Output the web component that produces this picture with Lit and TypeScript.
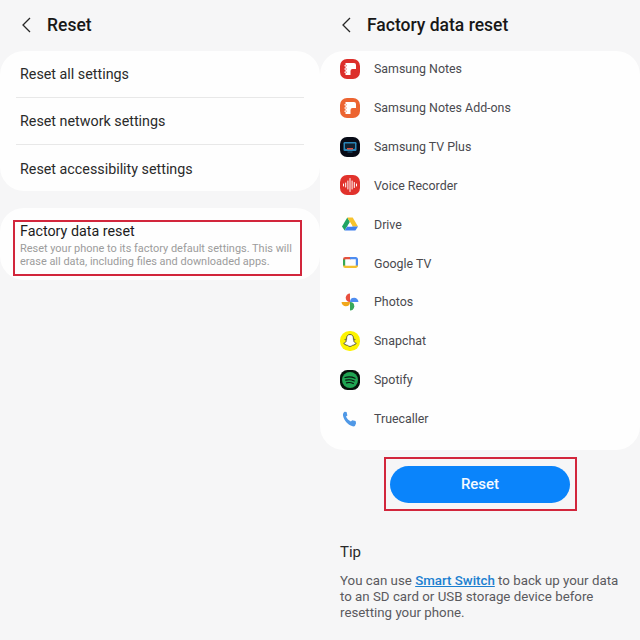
import { LitElement, html, css, svg } from "lit";
import { customElement } from "lit/decorators.js";

const notes = (bg: string) => svg`<svg viewBox="0 0 20 20" width="20" height="20">
  <rect width="20" height="20" rx="7" fill="${bg}"/>
  <path d="M5.500 4h8.500a2 2 0 0 1 2 2v4h-3.500a2 2 0 0 0-2 2v4H5.500z" fill="#fff"/>
  <path d="M4.200 6.800h2M4.200 10h2M4.200 13.200h2" stroke="#fff" stroke-width=".9"/>
  <path d="M6 6.800h.8M6 10h.8M6 13.200h.8" stroke="${bg}" stroke-width=".9"/>
</svg>`;

const icons: Record<string, unknown> = {
  notes: notes("#dc2f2b"),
  addons: notes("#ec6431"),
  tv: svg`<svg viewBox="0 0 20 20" width="20" height="20">
    <rect width="20" height="20" rx="7" fill="#070b16"/>
    <rect x="3.500" y="5" width="13" height="9" rx="1.200" fill="#2a86b8"/>
    <path d="M5 6.500h10v4.500a1 1 0 0 1-1 1H6a1 1 0 0 1-1-1z" fill="#12202f"/>
    <path d="M7 11h6v1.500H7z" fill="#d9503f"/>
    <path d="M7.500 15h5" stroke="#2a86b8" stroke-width=".7"/>
  </svg>`,
  voice: svg`<svg viewBox="0 0 20 20" width="20" height="20">
    <rect width="20" height="20" rx="7" fill="#e1322c"/>
    <path d="M3.500 9v2M5.700 8v4M7.900 6v8M10 3.500v13M12.100 6v8M14.300 7.500v5M16.500 9v2" stroke="#fff" stroke-width="1" stroke-linecap="round"/>
  </svg>`,
  drive: svg`<svg viewBox="0 0 16 14" width="16" height="14">
    <path d="M5.300.5 0 9.500l2.600 4L7.900 5z" fill="#1fa463"/>
    <path d="M5.300.5h5.400L16 9.500h-5.300z" fill="#f7c32e"/>
    <path d="M16 9.500l-2.600 4H2.600L5.200 9.500z" fill="#3f7fee"/>
    <path d="M8 5.200l2.500 4.300h-5z" fill="#fff"/>
  </svg>`,
  gtv: svg`<svg viewBox="0 0 15 12" width="15" height="12">
    <path d="M1.100 3V2.300a1.200 1.200 0 0 1 1.200-1.200H8" fill="none" stroke="#e5503f" stroke-width="2.200"/>
    <path d="M7 1.100h5.700a1.200 1.200 0 0 1 1.200 1.200V9" fill="none" stroke="#4d8cf0" stroke-width="2.200"/>
    <path d="M1.100 2.500V9" fill="none" stroke="#34a853" stroke-width="2.200"/>
    <path d="M1.100 8.500v.2a1.200 1.200 0 0 0 1.200 1.200h10.400a1.200 1.200 0 0 0 1.200-1.200v-.2" fill="none" stroke="#f4c02f" stroke-width="2.200"/>
  </svg>`,
  photos: svg`<svg viewBox="0 0 16 16" width="18" height="18">
    <path d="M8 8V.5a3.800 3.800 0 0 0-3.800 3.800A3.800 3.800 0 0 0 8 8z" fill="#f1a71b" transform="rotate(-90 8 8)"/>
    <path d="M8 8V.5a3.800 3.800 0 0 0-3.800 3.800A3.800 3.800 0 0 0 8 8z" fill="#e8503f"/>
    <path d="M8 8V.5a3.800 3.800 0 0 0-3.800 3.800A3.800 3.800 0 0 0 8 8z" fill="#4d8cf0" transform="rotate(90 8 8)"/>
    <path d="M8 8V.5a3.800 3.800 0 0 0-3.800 3.800A3.800 3.800 0 0 0 8 8z" fill="#38a85a" transform="rotate(180 8 8)"/>
  </svg>`,
  snap: svg`<svg viewBox="0 0 20 20" width="20" height="20">
    <rect width="20" height="20" rx="9.500" fill="#fdf301"/>
    <path d="M10 3.500c2.300 0 3.400 1.800 3.400 3.500v1.500l1.300-.3c.4.200.3.600-.1.900l-1 .5c.4 1.400 1.300 2.300 2.700 2.800-.2.700-1 .7-1.600.9l-.4.800c-.7 0-1.300-.1-1.900.3-.8.500-1.400 1.100-2.400 1.100s-1.600-.6-2.400-1.100c-.6-.4-1.200-.3-1.900-.3l-.4-.8c-.6-.2-1.400-.2-1.600-.9 1.400-.5 2.300-1.400 2.700-2.800l-1-.5c-.4-.3-.5-.7-.1-.9l1.300.3V7c0-1.700 1.100-3.500 3.400-3.500z" fill="#fff" stroke="#222" stroke-width=".7"/>
  </svg>`,
  spotify: svg`<svg viewBox="0 0 20 20" width="20" height="20">
    <rect width="20" height="20" rx="7.500" fill="#06120b"/>
    <circle cx="10" cy="10" r="8" fill="#1fa552"/>
    <path d="M5 7.500c3.500-1 7-.7 10 .8M5.700 10.200c3-.8 6-.5 8.500.8M6.500 12.800c2.500-.6 4.800-.3 6.800.7" fill="none" stroke="#06120b" stroke-width="1.200" stroke-linecap="round"/>
  </svg>`,
  phone: svg`<svg viewBox="0 0 14 14" width="16" height="16">
    <path d="M2.300.6 4 .9l.7 3-1.200 1c.8 2 2.300 3.500 4.300 4.300l1.100-1.100 3 .6.400 2-.9 2.300c-.4.500-1.200.7-2.200.4C5 12 1.800 8.500.9 4.200.7 2.600 1.100 1.300 2.300.6z" fill="#4f98e6"/>
  </svg>`,
};

const apps: [string, string][] = [
  ["notes", "Samsung Notes"],
  ["addons", "Samsung Notes Add-ons"],
  ["tv", "Samsung TV Plus"],
  ["voice", "Voice Recorder"],
  ["drive", "Drive"],
  ["gtv", "Google TV"],
  ["photos", "Photos"],
  ["snap", "Snapchat"],
  ["spotify", "Spotify"],
  ["phone", "Truecaller"],
];

const chevron = svg`<svg class="chev" viewBox="0 0 10 16" width="10" height="16"><path d="M9 1 2 8l7 7" fill="none" stroke="#262626" stroke-width="1.300"/></svg>`;

@customElement("app-root")
export class AppRoot extends LitElement {
  static styles = css`
    :host {
      display: block;
      width: 640px;
      height: 640px;
      overflow: hidden;
      background: #f6f6f7;
      font-family: Roboto, "Liberation Sans", sans-serif;
      color: #1f1f1f;
    }
    .screens {
      display: grid;
      grid-template-columns: 320px 320px;
      height: 640px;
    }
    .header {
      display: flex;
      align-items: center;
      height: 51px;
      padding-left: 21px;
      gap: 16px;
      box-sizing: border-box;
      padding-bottom: 2px;
    }
    .header h1 {
      margin: 0;
      font-size: 17.500px;
      font-weight: 500;
      color: #181818;
    }
    .card {
      background: #fefefe;
      border-radius: 24px;
    }
    .list {
      padding: 0 16px;
      height: 140px;
      box-sizing: border-box;
    }
    .row {
      height: 47px;
      padding-left: 4px;
      display: flex;
      align-items: center;
      font-size: 14.300px;
      box-sizing: border-box;
      border-bottom: 1px solid #e8e8e8;
      color: #2a2a2a;
    }
    .row:last-child {
      border-bottom: none;
    }
    .factory {
      margin-top: 17px;
      height: 72px;
      padding: 12px 18px 0 13px;
      box-sizing: border-box;
    }
    .redbox {
      border: 2px solid #d2263c;
      height: 56px;
      box-sizing: border-box;
      padding: 1px 0 0 5px;
    }
    .redbox .t {
      font-size: 14.300px;
      line-height: 17px;
      color: #1c1c1c;
    }
    .redbox .d {
      font-size: 10.950px;
      line-height: 13px;
      color: #9c9c9c;
      margin-top: 2px;
      white-space: nowrap;
    }
    .apps {
      height: 399px;
      box-sizing: border-box;
      padding-left: 20px;
      display: flex;
      flex-direction: column;
    }
    .app {
      height: 38.850px;
      flex: none;
      display: flex;
      align-items: center;
      font-size: 12.400px;
      color: #4a4a4f;
    }
    .ic {
      width: 20px;
      height: 20px;
      margin-right: 14px;
      display: flex;
      align-items: center;
      justify-content: center;
    }
    .apps .app:first-child {
      margin-top: -1.500px;
    }
    .btnbox {
      margin: 7px auto 0;
      width: 193px;
      height: 54px;
      border: 2px solid #d2263c;
      box-sizing: border-box;
      display: flex;
      align-items: center;
      justify-content: center;
    }
    .btn {
      width: 180px;
      height: 37px;
      border-radius: 19px;
      background: #0a84fb;
      color: #f4f9ff;
      font-size: 15px;
      font-weight: 500;
      display: flex;
      align-items: center;
      justify-content: center;
    }
    .tip {
      padding: 32px 20px 0;
    }
    .tip h2 {
      margin: 0;
      font-size: 15px;
      font-weight: 400;
      line-height: 18px;
      color: #2a2a2a;
    }
    .tip p {
      margin: 12px 0 0;
      font-size: 13.300px;
      line-height: 16px;
      color: #5a5a5e;
    }
    .tip a {
      color: #1c7fd0;
      text-decoration: underline;
      font-weight: 500;
    }
  `;

  render() {
    return html`<div class="screens">
      <section>
        <div class="header">${chevron}<h1>Reset</h1></div>
        <div class="card list">
          <div class="row">Reset all settings</div>
          <div class="row">Reset network settings</div>
          <div class="row">Reset accessibility settings</div>
        </div>
        <div class="card factory">
          <div class="redbox">
            <div class="t">Factory data reset</div>
            <div class="d">Reset your phone to its factory default settings. This will<br />erase all data, including files and downloaded apps.</div>
          </div>
        </div>
      </section>
      <section>
        <div class="header">${chevron}<h1>Factory data reset</h1></div>
        <div class="card apps">
          ${apps.map(
            ([k, name]) => html`<div class="app"><span class="ic">${icons[k]}</span>${name}</div>`
          )}
        </div>
        <div class="btnbox"><div class="btn">Reset</div></div>
        <div class="tip">
          <h2>Tip</h2>
          <p>You can use <a>Smart Switch</a> to back up your data to an SD card or USB storage device before resetting your phone.</p>
        </div>
      </section>
    </div>`;
  }
}
